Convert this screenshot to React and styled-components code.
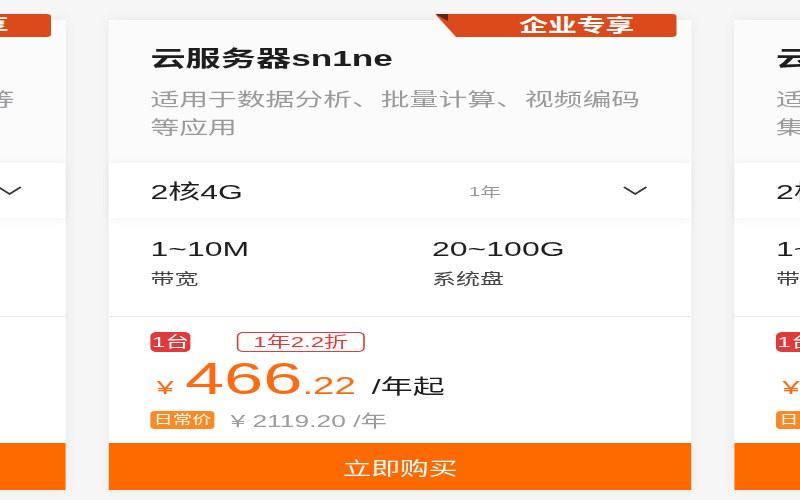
import React from 'react';
import styled, { createGlobalStyle, css } from 'styled-components';

const GlobalStyle = createGlobalStyle`
  html, body {
    margin: 0;
    padding: 0;
    background: #f6f6f6;
  }
  body {
    font-family: "Liberation Sans", "Noto Sans CJK SC", sans-serif;
    overflow: hidden;
  }
`;

/* the shot is a wide-stretched phone carousel: lay out at 500px and stretch */
const Stage = styled.div`
  width: 500px;
  height: 500px;
  transform: scaleX(1.6);
  transform-origin: 0 0;
`;

const Track = styled.div`
  display: flex;
  justify-content: center;
  gap: 27px;
  padding-top: 20px;
`;

const Card = styled.div`
  position: relative;
  flex: 0 0 364px;
  height: 470px;
  display: flex;
  flex-direction: column;
  background: #fff;
  box-shadow: 0 0 10px rgba(0, 0, 0, 0.06);
`;

const Badge = styled.div`
  position: absolute;
  top: -6px;
  right: 9px;
  width: 151px;
  height: 23px;
  display: flex;
  align-items: center;
  justify-content: center;
  padding-left: 26px;
  box-sizing: border-box;
  background: #dc4a1c;
  border-radius: 0 3px 3px 0;
  clip-path: polygon(0 0, 100% 0, 100% 100%, 13px 100%);
  color: #fff;
  font-size: 18px;
  line-height: 22px;
  font-weight: 700;

  &::before {
    content: '';
    position: absolute;
    left: 0;
    top: 0;
    width: 8px;
    height: 7px;
    background: #5b2716;
    clip-path: polygon(0 0, 100% 0, 100% 100%);
  }
`;

const Header = styled.div`
  background: #fbfbfb;
  padding: 23px 26px 21px;
`;

const Title = styled.h2`
  margin: 0;
  font-size: 22px;
  line-height: 31px;
  font-weight: 700;
  color: #1e1e1e;
`;

const Desc = styled.p`
  margin: 12px 0 0;
  font-size: 18px;
  line-height: 28px;
  height: 56px;
  color: #9a9a9a;
`;

const SelectRow = styled.div`
  display: flex;
  align-items: center;
  height: 55px;
  padding: 0 27px 0 26px;
  background: #fff;
  box-shadow: 0 1px 8px rgba(0, 0, 0, 0.06);
  position: relative;
`;

const SelectLabel = styled.span`
  width: 199px;
  font-size: 20px;
  color: #1e1e1e;
`;

const SelectTerm = styled.span`
  font-size: 13px;
  color: #999;
`;

const Chevron = styled.svg`
  margin-left: auto;
  width: 16px;
  height: 9px;
`;

const Specs = styled.div`
  display: grid;
  grid-template-columns: 176px 1fr;
  padding: 18px 26px 26px;
  border-bottom: 1px solid #ececec;
`;

const SpecValue = styled.div`
  font-size: 20px;
  line-height: 26px;
  color: #1e1e1e;
`;

const SpecLabel = styled.div`
  margin-top: 6px;
  font-size: 15px;
  line-height: 22px;
  color: #444;
`;

const PriceBox = styled.div`
  flex: 1;
  padding: 15px 26px 0;
`;

const Tags = styled.div`
  display: flex;
  gap: 29px;
`;

const Tag = styled.span`
  height: 20px;
  line-height: 18px;
  box-sizing: border-box;
  border-radius: 4px;
  font-size: 15px;
  border: 1px solid #e2393b;

  ${p =>
    p.filled
      ? css`
          background: #e2393b;
          color: #fff;
          padding: 0;
        `
      : css`
          color: #e2393b;
          padding: 0 9px;
        `};
`;

const PriceRow = styled.div`
  display: flex;
  align-items: baseline;
  height: 44px;
  margin-top: 5px;
  color: #ff6a10;
`;

const Yen = styled.span`
  font-size: 19px;
  margin: 0 7px 0 4px;
`;

const Amount = styled.span`
  font-size: 44px;
  line-height: 44px;
`;

const Cents = styled.span`
  font-size: 24px;
`;

const Unit = styled.span`
  margin-left: 10px;
  font-size: 20px;
  color: #1e1e1e;
`;

const RegularRow = styled.div`
  display: flex;
  align-items: center;
  margin-top: 7px;
`;

const RegularTag = styled.span`
  height: 18px;
  line-height: 18px;
  padding: 0 2px;
  border-radius: 3px;
  background: #fb8a24;
  color: #fff;
  font-size: 12px;
`;

const RegularPrice = styled.span`
  margin-left: 10px;
  font-size: 16.5px;
  color: #9c9c9c;
`;

const BuyButton = styled.button`
  height: 47px;
  border: 0;
  background: #ff6a00;
  color: #fff;
  font-family: inherit;
  font-size: 18px;
  cursor: pointer;
`;

const cards = [
  {
    name: '云服务器s6',
    desc: '适用于网站、开发测试、小型数据库等场景',
    spec: '2核4G',
    band: '1~5M',
    disk: '40~100G',
    discount: '1年2.5折',
    price: '398',
    cents: '.00',
    regular: '¥ 1592.00 /年',
    badge: true,
  },
  {
    name: '云服务器sn1ne',
    desc: '适用于数据分析、批量计算、视频编码等应用',
    spec: '2核4G',
    band: '1~10M',
    disk: '20~100G',
    discount: '1年2.2折',
    price: '466',
    cents: '.22',
    regular: '¥ 2119.20 /年',
    badge: true,
  },
  {
    name: '云服务器c7',
    desc: '适用于科学计算、游戏服务、视频处理集群计算等场景',
    spec: '2核4G',
    band: '1~10M',
    disk: '40~200G',
    discount: '1年2.3折',
    price: '512',
    cents: '.40',
    regular: '¥ 2228.00 /年',
    badge: false,
  },
];

const ServerCard = ({ card }) => (
  <Card>
    {card.badge && <Badge>企业专享</Badge>}
    <Header>
      <Title>{card.name}</Title>
      <Desc>{card.desc}</Desc>
    </Header>
    <SelectRow>
      <SelectLabel>{card.spec}</SelectLabel>
      <SelectTerm>1年</SelectTerm>
      <Chevron viewBox="0 0 16 9" fill="none">
        <polyline points="1,1 8,8 15,1" stroke="#333" strokeWidth="1.5" />
      </Chevron>
    </SelectRow>
    <Specs>
      <div>
        <SpecValue>{card.band}</SpecValue>
        <SpecLabel>带宽</SpecLabel>
      </div>
      <div>
        <SpecValue>{card.disk}</SpecValue>
        <SpecLabel>系统盘</SpecLabel>
      </div>
    </Specs>
    <PriceBox>
      <Tags>
        <Tag filled>1台</Tag>
        <Tag>{card.discount}</Tag>
      </Tags>
      <PriceRow>
        <Yen>¥</Yen>
        <Amount>{card.price}</Amount>
        <Cents>{card.cents}</Cents>
        <Unit>/年起</Unit>
      </PriceRow>
      <RegularRow>
        <RegularTag>日常价</RegularTag>
        <RegularPrice>{card.regular}</RegularPrice>
      </RegularRow>
    </PriceBox>
    <BuyButton>立即购买</BuyButton>
  </Card>
);

export default function App() {
  return (
    <>
      <GlobalStyle />
      <Stage>
        <Track>
          {cards.map(card => (
            <ServerCard key={card.name} card={card} />
          ))}
        </Track>
      </Stage>
    </>
  );
}
